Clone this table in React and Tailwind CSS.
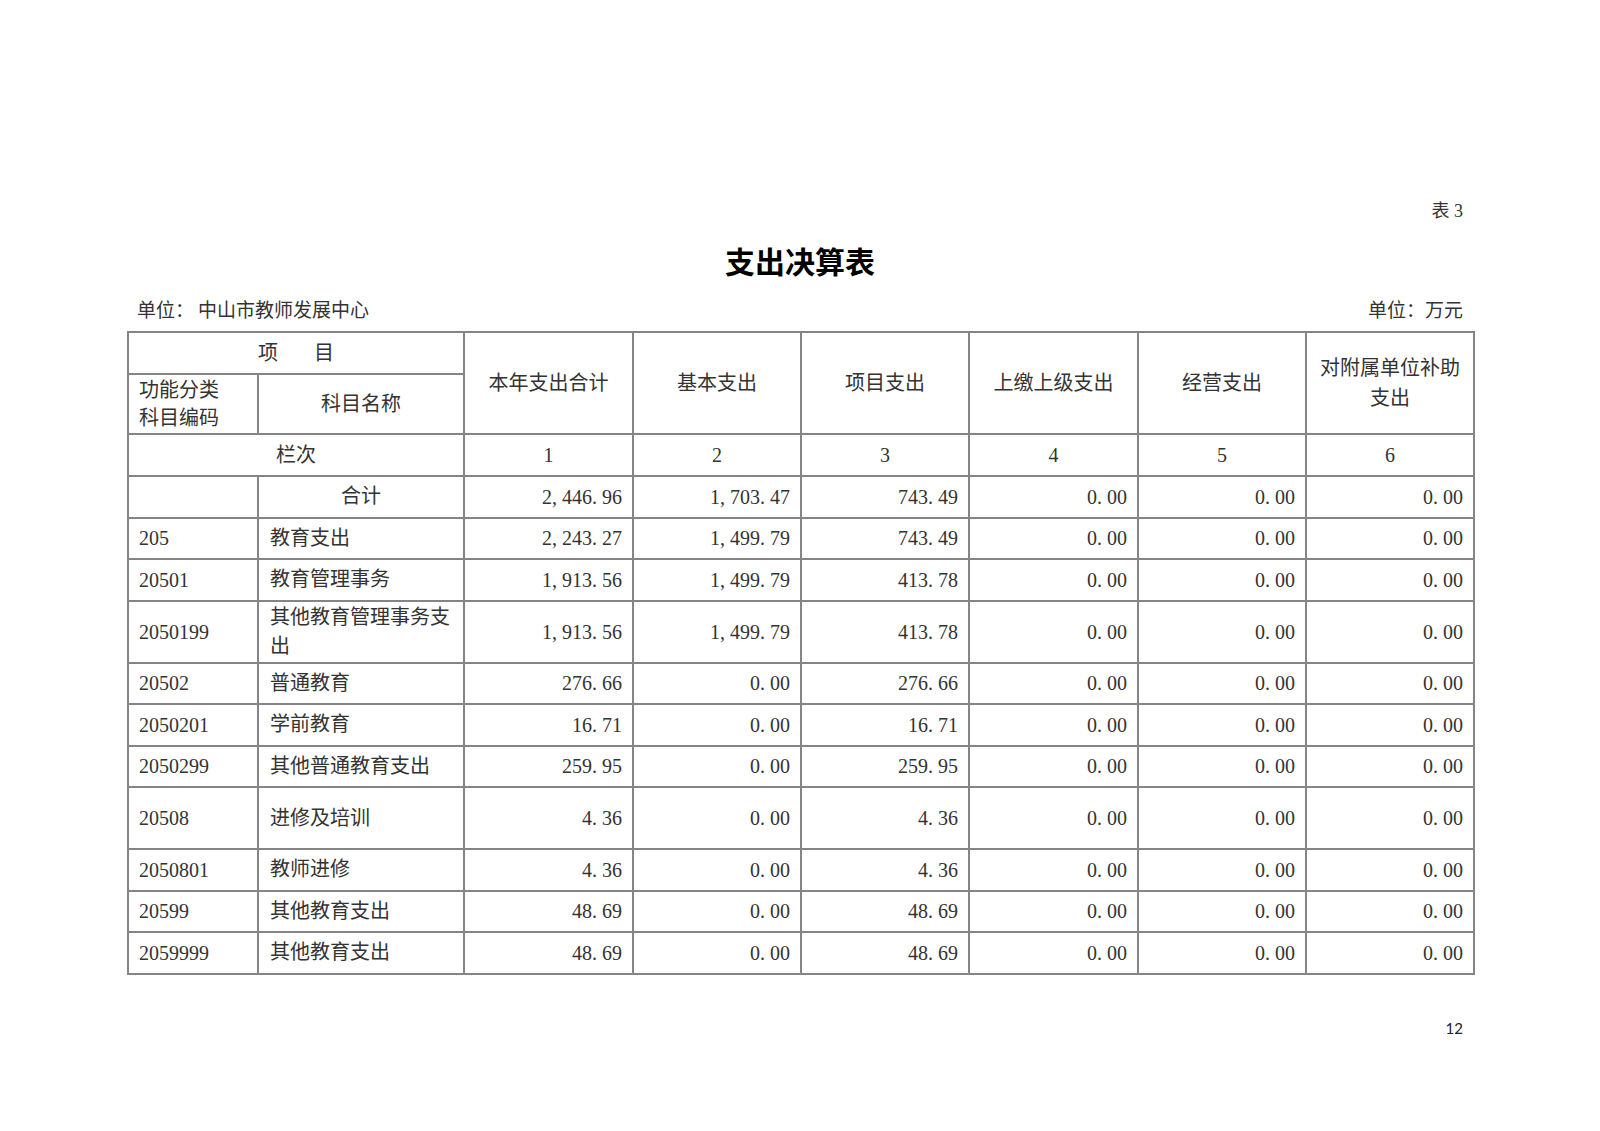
const rows = [
  { code: '', name: '合计', center: true, v: ['2,446.96', '1,703.47', '743.49', '0.00', '0.00', '0.00'] },
  { code: '205', name: '教育支出', v: ['2,243.27', '1,499.79', '743.49', '0.00', '0.00', '0.00'] },
  { code: '20501', name: '教育管理事务', v: ['1,913.56', '1,499.79', '413.78', '0.00', '0.00', '0.00'] },
  { code: '2050199', name: '其他教育管理事务支出', tall: true, v: ['1,913.56', '1,499.79', '413.78', '0.00', '0.00', '0.00'] },
  { code: '20502', name: '普通教育', v: ['276.66', '0.00', '276.66', '0.00', '0.00', '0.00'] },
  { code: '2050201', name: '学前教育', v: ['16.71', '0.00', '16.71', '0.00', '0.00', '0.00'] },
  { code: '2050299', name: '其他普通教育支出', v: ['259.95', '0.00', '259.95', '0.00', '0.00', '0.00'] },
  { code: '20508', name: '进修及培训', tall: true, v: ['4.36', '0.00', '4.36', '0.00', '0.00', '0.00'] },
  { code: '2050801', name: '教师进修', v: ['4.36', '0.00', '4.36', '0.00', '0.00', '0.00'] },
  { code: '20599', name: '其他教育支出', v: ['48.69', '0.00', '48.69', '0.00', '0.00', '0.00'] },
  { code: '2059999', name: '其他教育支出', v: ['48.69', '0.00', '48.69', '0.00', '0.00', '0.00'] },
];

const heads = ['本年支出合计', '基本支出', '项目支出', '上缴上级支出', '经营支出'];

// 宋体的逗号和小数点占半个字宽
function Num({ value }) {
  return (
    <>
      {value.split('').map((ch, i) =>
        ch === ',' || ch === '.' ? (
          <span key={i} className="inline-block w-[0.5em] text-left">{ch}</span>
        ) : (
          <span key={i}>{ch}</span>
        )
      )}
    </>
  );
}

const cell = 'border-2 border-[#858585]';

export default function App() {
  return (
    <div
      className="w-[1600px] h-[1131px] bg-white text-[#333]"
      style={{ fontFamily: '"Liberation Serif", "Noto Sans CJK SC", serif' }}
    >
      <div className="w-[1346px] mx-auto pt-[199px]">
        <div className="text-right pr-[10px] text-[18px] leading-[24px]">表 3</div>

        <h1
          className="mt-[17px] text-center text-[30px] leading-[40px] font-bold text-black"
          style={{ fontFamily: '"Noto Sans CJK SC", sans-serif' }}
        >
          支出决算表
        </h1>

        <div className="mt-[19px] flex justify-between px-[10px] text-[19px] leading-[24px]">
          <span>
            单位：<span className="ml-[4px]">中山市教师发展中心</span>
          </span>
          <span>单位：万元</span>
        </div>

        <table className="mt-[8px] w-[1346px] table-fixed border-collapse text-[20px]">
          <colgroup>
            <col className="w-[130px]" />
            <col className="w-[206px]" />
            <col className="w-[169px]" />
            <col className="w-[168px]" />
            <col className="w-[168px]" />
            <col className="w-[169px]" />
            <col className="w-[168px]" />
            <col className="w-[168px]" />
          </colgroup>
          <thead>
            <tr className="h-[42px]">
              <th colSpan={2} className={`${cell} font-normal`}>
                <span className="inline-flex gap-[36px]">
                  <span>项</span>
                  <span>目</span>
                </span>
              </th>
              {heads.map((h) => (
                <th key={h} rowSpan={2} className={`${cell} font-normal`}>
                  {h}
                </th>
              ))}
              <th rowSpan={2} className={`${cell} font-normal leading-[30px]`}>
                对附属单位补助
                <br />
                支出
              </th>
            </tr>
            <tr className="h-[60px]">
              <th className={`${cell} font-normal text-left pl-[10px] leading-[28px]`}>
                功能分类
                <br />
                科目编码
              </th>
              <th className={`${cell} font-normal`}>科目名称</th>
            </tr>
            <tr className="h-[42px]">
              <td colSpan={2} className={`${cell} text-center`}>栏次</td>
              {[1, 2, 3, 4, 5, 6].map((n) => (
                <td key={n} className={`${cell} text-center`}>
                  {n}
                </td>
              ))}
            </tr>
          </thead>
          <tbody>
            {rows.map((r, i) => (
              <tr key={i} className={r.tall ? 'h-[62px]' : 'h-[41.5px]'}>
                <td className={`${cell} pl-[10px]`}>{r.code}</td>
                <td
                  className={`${cell} leading-[29px] ${
                    r.center ? 'text-center' : 'pl-[11px] pr-[10px]'
                  }`}
                >
                  {r.name}
                </td>
                {r.v.map((x, j) => (
                  <td key={j} className={`${cell} text-right pr-[10px]`}>
                    <Num value={x} />
                  </td>
                ))}
              </tr>
            ))}
          </tbody>
        </table>

        <div
          className="mt-[43px] text-right pr-[10px] text-[15px] leading-[20px] text-[#222]"
          style={{ fontFamily: 'Lato, sans-serif' }}
        >
          12
        </div>
      </div>
    </div>
  );
}
